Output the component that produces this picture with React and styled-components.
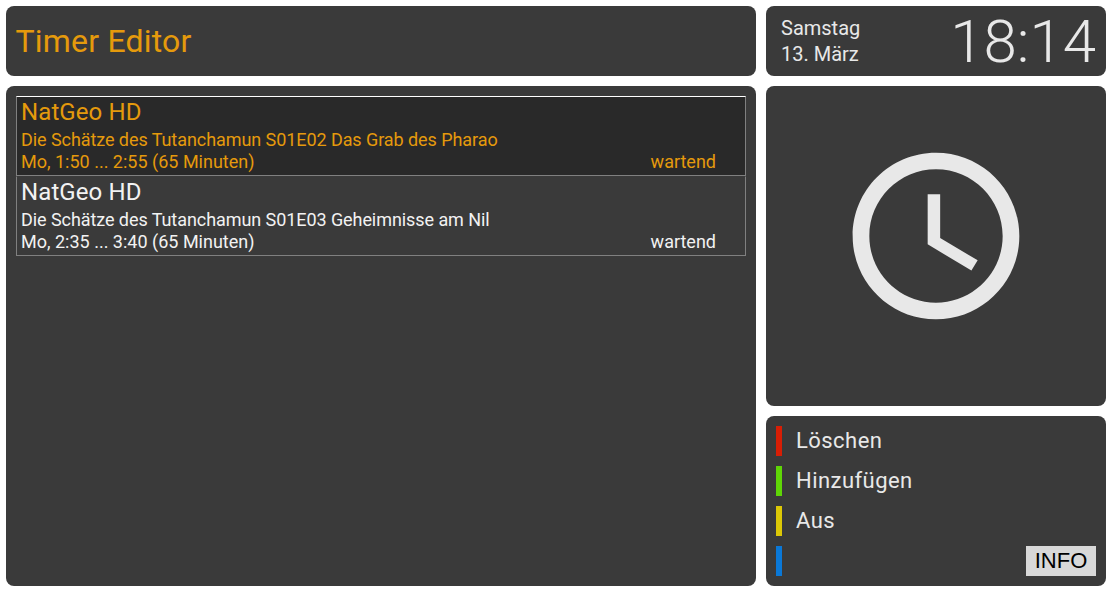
import React from "react";
import styled, { createGlobalStyle } from "styled-components";

const timers = [
  {
    channel: "NatGeo HD",
    title: "Die Schätze des Tutanchamun S01E02 Das Grab des Pharao",
    time: "Mo, 1:50 ... 2:55 (65 Minuten)",
    status: "wartend",
    selected: true,
  },
  {
    channel: "NatGeo HD",
    title: "Die Schätze des Tutanchamun S01E03 Geheimnisse am Nil",
    time: "Mo, 2:35 ... 3:40 (65 Minuten)",
    status: "wartend",
  },
];

const keys = [
  { color: "#d81e05", label: "Löschen" },
  { color: "#5fd606", label: "Hinzufügen" },
  { color: "#dcc806", label: "Aus" },
  { color: "#0a78d7", label: "" },
];

export default function App() {
  return (
    <Screen>
      <GlobalStyle />
      <Header>
        <Title>Timer Editor</Title>
      </Header>
      <DateTime>
        <DateText>
          <span>Samstag</span>
          <span>13. März</span>
        </DateText>
        <Clock>18:14</Clock>
      </DateTime>
      <ListPanel>
        <TimerList>
          {timers.map((timer) => (
            <TimerRow key={timer.title} $selected={timer.selected}>
              <Channel>{timer.channel}</Channel>
              <EventTitle>{timer.title}</EventTitle>
              <TimeLine>
                <span>{timer.time}</span>
                <span>{timer.status}</span>
              </TimeLine>
            </TimerRow>
          ))}
        </TimerList>
      </ListPanel>
      <SideColumn>
        <IconPanel>
          <svg width="200" height="200" viewBox="0 0 24 24" fill="#e8e8e8">
            <path d="M11.99 2C6.47 2 2 6.48 2 12s4.47 10 9.99 10C17.52 22 22 17.52 22 12S17.52 2 11.99 2zM12 20c-4.42 0-8-3.58-8-8s3.58-8 8-8 8 3.58 8 8-3.58 8-8 8zm.5-13H11v6l5.25 3.15.75-1.23-4.5-2.67z" />
          </svg>
        </IconPanel>
        <KeysPanel>
          {keys.map((key) => (
            <KeyRow key={key.color}>
              <ColorBar $color={key.color} />
              <KeyLabel>{key.label}</KeyLabel>
            </KeyRow>
          ))}
          <InfoBadge>INFO</InfoBadge>
        </KeysPanel>
      </SideColumn>
    </Screen>
  );
}

const GlobalStyle = createGlobalStyle`
  html, body {
    margin: 0;
    padding: 0;
    background: #fff;
  }
  body {
    font-family: Roboto, "Liberation Sans", sans-serif;
  }
`;

const Screen = styled.div`
  display: grid;
  grid-template-columns: 750px 340px;
  grid-template-rows: 70px 500px;
  gap: 10px;
  padding: 6px 0 0 6px;
  width: 1110px;
  height: 589px;
  box-sizing: border-box;
  overflow: hidden;
`;

const Panel = styled.div`
  background: #3a3a3a;
  border-radius: 8px;
  box-sizing: border-box;
`;

const Header = styled(Panel)`
  display: flex;
  align-items: center;
  padding-left: 9.5px;
`;

const Title = styled.h1`
  margin: 0;
  font-size: 32px;
  font-weight: 400;
  letter-spacing: 0.2px;
  color: #e59a0c;
`;

const DateTime = styled(Panel)`
  display: flex;
  align-items: center;
  justify-content: space-between;
  padding: 0 10px 0 15px;
  color: #e8e8e8;
`;

const DateText = styled.div`
  display: flex;
  flex-direction: column;
  font-size: 20px;
  line-height: 26px;
`;

const Clock = styled.div`
  padding-top: 2px;
  font-size: 60px;
  font-weight: 300;
  line-height: 70px;
`;

const ListPanel = styled(Panel)`
  padding: 10px;
`;

const TimerList = styled.div`
  display: flex;
  flex-direction: column;
`;

const TimerRow = styled.div`
  display: flex;
  flex-direction: column;
  height: 80px;
  box-sizing: border-box;
  padding: 0 29px 0 4px;
  border: 1px solid #808080;
  border-top: 1px solid ${(p) => (p.$selected ? "#fff" : "transparent")};
  background: ${(p) => (p.$selected ? "#292929" : "transparent")};
  background-clip: padding-box;
  color: ${(p) => (p.$selected ? "#e59a0c" : "#f2f2f2")};
`;

const Channel = styled.div`
  font-size: 24px;
  line-height: 30px;
  letter-spacing: 0.1px;
`;

const EventTitle = styled.div`
  margin-top: 2px;
  font-size: 18px;
  line-height: 22px;
  letter-spacing: -0.07px;
`;

const TimeLine = styled.div`
  display: flex;
  justify-content: space-between;
  font-size: 18px;
  line-height: 22px;
`;

const SideColumn = styled.div`
  display: flex;
  flex-direction: column;
  gap: 10px;
`;

const IconPanel = styled(Panel)`
  display: flex;
  align-items: center;
  justify-content: center;
  height: 320px;
  padding-bottom: 20px;
`;

const KeysPanel = styled(Panel)`
  position: relative;
  display: flex;
  flex-direction: column;
  gap: 10px;
  height: 170px;
  padding: 10px;
`;

const KeyRow = styled.div`
  display: flex;
  align-items: center;
  height: 30px;
`;

const ColorBar = styled.div`
  width: 6px;
  height: 30px;
  background: ${(p) => p.$color};
`;

const KeyLabel = styled.span`
  margin-left: 14px;
  padding-bottom: 2px;
  font-size: 22px;
  letter-spacing: 0.45px;
  color: #e8e8e8;
`;

const InfoBadge = styled.div`
  position: absolute;
  right: 10px;
  bottom: 10px;
  width: 70px;
  height: 30px;
  display: flex;
  align-items: center;
  justify-content: center;
  background: #d8d8d8;
  color: #000;
  font-family: "Liberation Sans", Arial, sans-serif;
  font-size: 22px;
`;
